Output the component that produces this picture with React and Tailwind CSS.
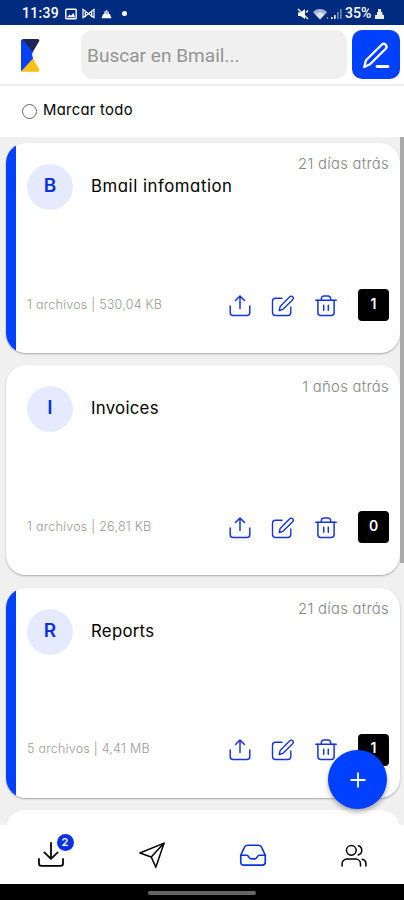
import clsx from "clsx";

const folders = [
  { letter: "B", name: "Bmail infomation", date: "21 días atrás", files: "1 archivos | 530,04 KB", count: 1, unread: true, nameClass: "tracking-[0.53px]" },
  { letter: "I", name: "Invoices", date: "1 años atrás", files: "1 archivos | 26,81 KB", count: 0, unread: false, nameClass: "tracking-[0.27px]" },
  { letter: "R", name: "Reports", date: "21 días atrás", files: "5 archivos | 4,41 MB", count: 1, unread: true, nameClass: "tracking-[0.27px]" },
];

function Icon({ children, className, width = 1.5 }) {
  return (
    <svg viewBox="0 0 24 24" fill="none" stroke="currentColor" strokeWidth={width} strokeLinecap="round" strokeLinejoin="round" className={clsx("shrink-0", className)}>
      {children}
    </svg>
  );
}

function StatusBar() {
  return (
    <div className="flex h-[25px] shrink-0 items-center bg-[#002b7f] pt-[2px] pl-[22px] pr-[20px] font-['Roboto',sans-serif] text-[14px] font-medium text-white">
      <span className="w-[37px] tracking-[0.3px]">11:39</span>
      <svg viewBox="0 0 12 12" className="ml-[6px] size-3">
        <rect x="0.8" y="1.2" width="10.4" height="9.6" rx="0.8" fill="none" stroke="white" strokeWidth="1.4" />
        <path d="M2 9.3 4.5 6.5 6 7.7 8.3 5 10.3 9.3z" fill="white" />
      </svg>
      <svg viewBox="0 0 14 12" className="ml-[5px] h-[11px] w-[13px]" fill="none" stroke="white" strokeWidth="1.3">
        <path d="M1 10.5V1.5l6 4.7 6-4.7v9L7 6.2z" />
        <path d="M3.5 3v7M10.5 3v7" />
      </svg>
      <svg viewBox="0 0 12 12" className="ml-[6px] h-[10px] w-[11px]" fill="white">
        <path d="M3 6V3.5L6 1l3 2.5V6z" opacity="0.7" />
        <path d="M2 6h8l2 5H0z" />
      </svg>
      <span className="ml-[10px] size-[5px] rounded-full bg-white" />
      <span className="flex-1" />
      <svg viewBox="0 0 12 12" className="size-3" fill="white">
        <path d="M1 4.5h2.5L8 1v10L3.5 8H1z" />
        <path d="m1 1 10 10M9 4.5l2-2" stroke="white" strokeWidth="1.4" />
      </svg>
      <svg viewBox="0 0 16 12" className="ml-[4px] h-3 w-4" fill="white">
        <path d="M0 4.2C4-.2 10-.2 14 4.2L7 11.5z" opacity="0.65" />
        <path d="M2.5 6.5c3-2.6 6-2.6 9 0L7 11.5z" opacity="0.6" />
        <circle cx="14.5" cy="10" r="0.8" opacity="0.7" />
      </svg>
      <svg viewBox="0 0 12 12" className="ml-[1px] mr-[3px] size-3" fill="white">
        <path d="M1 9h1.6v2H1zM4 7h1.6v4H4z" />
        <path d="M7 4h1.6v7H7zM10 1h1.6v10H10z" opacity="0.45" />
      </svg>
      <span className="w-[30px]">35%</span>
      <svg viewBox="0 0 9 12" className="h-3 w-[9px]" fill="white">
        <path d="M3 1h3v2l1.5 2v2H9v4H0V7h2V4h1z" opacity="0.9" />
      </svg>
    </div>
  );
}

function Header() {
  return (
    <div className="flex h-[61px] shrink-0 items-center border-b-2 border-[#eeeeee] bg-white pl-[21px]">
      <svg viewBox="0 0 19 33" className="mt-[2px] h-[33px] w-[19px]">
        <path d="M2 0h14.5c1.6 0 2.3 1.2 1.5 2.6L11.5 13.5 1 1z" fill="#1d2456" />
        <path d="M0 2C0 .8.8.2 1.6.8L11.8 13c-1 1.8-1 4.4.6 6.4L1.6 32C.8 32.6 0 32 0 31z" fill="#0540f5" />
        <path d="M12 19.5 18 30c.8 1.5 0 2.8-1.5 2.8H1.5c-.8 0-1-.6-.5-1.2z" fill="#fcc113" />
      </svg>
      <div className="ml-[41px] flex h-[49px] w-[266px] items-center rounded-xl bg-[#f0f0f0] pt-[3px] pl-[6px] font-['Roboto',sans-serif] text-[19px] text-[#949494]">
        <span className="tracking-[0.04px]">Buscar en Bmail...</span>
      </div>
      <button className="ml-[5px] grid h-[49px] w-[48px] place-items-center rounded-[10px] bg-[#0040ff] text-white">
        <svg viewBox="0 0 30 30" className="size-[30px]" fill="none" stroke="currentColor" strokeWidth="2.3" strokeLinejoin="round" strokeLinecap="round">
          <path d="M3.2 27 5 20.2 20.7 4.8c1.2-1.2 2.8-1.2 4 0s1.1 2.7 0 3.9L9 24.2z" />
          <path d="M16 26.5h11" strokeWidth="2.8" />
        </svg>
      </button>
    </div>
  );
}

function FolderCard({ folder }) {
  return (
    <div className="flex h-[210px] shrink-0 overflow-hidden rounded-[20px] bg-white pr-[11px] shadow-[0_1px_2px_rgba(0,0,0,0.3)]">
      <div className={clsx("w-[10px] shrink-0", folder.unread && "bg-[#0040ff]")} />
      <div className="flex flex-1 flex-col justify-between pl-[11px]">
        <div className="flex items-start pt-[21px]">
          <div className="grid size-[46px] place-items-center rounded-full bg-[#e6eaff] pb-[2px] text-[19px] font-semibold text-[#0833df]">
            {folder.letter}
          </div>
          <h2 className={clsx("ml-[18px] mt-[11px] whitespace-nowrap text-[16.8px] leading-[23px] text-black", folder.nameClass)}>{folder.name}</h2>
          <span className="-mt-[8.6px] ml-auto whitespace-nowrap text-[14.8px] leading-[18px] font-light tracking-[0.3px] text-[#858585]">{folder.date}</span>
        </div>
        <div className="mb-[32px] flex h-8 items-center">
          <span className="flex-1 whitespace-nowrap text-[12.5px] font-light tracking-[0.24px] text-[#999]">{folder.files}</span>
          <div className="flex items-center gap-[19px] pt-[1px] text-[#1436d9]">
            <Icon className="size-6">
              <path d="M2.2 12v6.5a3 3 0 0 0 3 3h13.6a3 3 0 0 0 3-3V12" />
              <path d="M12 14.5v-12M7.5 6.5 12 2l4.5 4.5" />
            </Icon>
            <Icon className="size-6" width={1.4}>
              <path d="M11 4.2H4.5a3 3 0 0 0-3 3v11.3a3 3 0 0 0 3 3h12.3a3 3 0 0 0 3-3V13" />
              <path d="m8.2 16.5 1-4.1L18.5 3c1-1.1 2.4-1.1 3.2-.3s.8 2.1-.3 3.2L12 15.3z" />
            </Icon>
            <Icon className="size-6">
              <path d="M1.8 6.2h20.4M7.3 6V4.7a2.7 2.7 0 0 1 2.7-2.7h4a2.7 2.7 0 0 1 2.7 2.7V6" />
              <path d="M3.9 6.3v12.2a3 3 0 0 0 3 3h10.2a3 3 0 0 0 3-3V6.3M9.7 11.2v5M14.3 11.2v5" />
            </Icon>
          </div>
          <span className="ml-[20px] grid h-8 w-[31px] place-items-center rounded bg-black pb-[4px] text-[14px] font-semibold text-white">{folder.count}</span>
        </div>
      </div>
    </div>
  );
}

function BottomNav() {
  return (
    <nav className="grid h-[59px] shrink-0 grid-cols-4 place-items-center bg-white text-black">
      <div className="relative size-[28px]">
        <Icon className="size-[28px]" width={1.5}>
          <path d="M1.7 15.3v4a2 2 0 0 0 2 2h16.6a2 2 0 0 0 2-2v-4M12 1.5v13.7M6.3 9.7l5.7 5.7 5.7-5.7" />
        </Icon>
        <span className="absolute -top-[7px] left-[20px] grid size-[17px] place-items-center rounded-full bg-[#0833df] text-[11px] font-semibold text-white">2</span>
      </div>
      <Icon className="size-[26px]" width={1.4}>
        <path d="M23.2 1 .8 10.2l10.5 3.6 4.2 9.4zM23.2 1 11.3 13.8" />
      </Icon>
      <Icon className="size-[28px] text-[#0833df]" width={1.4}>
        <path d="M1.5 12.2h5.2c1 0 1.3.8 1.8 1.7.5 1 1 1.4 2 1.4h3c1 0 1.5-.5 2-1.4.5-.9.8-1.7 1.8-1.7h5.2" />
        <path d="M1.5 12.2 4.6 5.4c.5-1.2 1.5-1.8 2.8-1.8h9.2c1.3 0 2.3.6 2.8 1.8l3.1 6.8v6c0 1.6-.9 2.5-2.5 2.5H4c-1.6 0-2.5-.9-2.5-2.5z" />
      </Icon>
      <Icon className="mt-[2px] size-[26px]" width={1.4}>
        <circle cx="9.5" cy="6.8" r="4.5" />
        <path d="M1 21.2v-2a4.4 4.4 0 0 1 4.4-4.4h8.2a4.4 4.4 0 0 1 4.4 4.4v2M23 21.2v-2a4.4 4.4 0 0 0-3.4-4.2M16 2.5a4.5 4.5 0 0 1 0 8.6" />
      </Icon>
    </nav>
  );
}

export default function App() {
  return (
    <div className="relative flex h-[900px] w-[404px] flex-col overflow-hidden bg-[#f0f0f1] font-['Inter',sans-serif] [font-feature-settings:'cv11']">
      <StatusBar />
      <Header />
      <label className="flex h-[51px] shrink-0 items-center bg-white pl-[22px] text-[14.8px] text-black">
        <span className="mt-[-1px] size-[15px] rounded-full border border-[#666]" />
        <span className="-mt-[2px] ml-[6px] tracking-[0.3px]">Marcar todo</span>
      </label>
      <main className="flex min-h-0 flex-1 overflow-hidden">
        <div className="flex w-[400px] flex-col gap-[12.4px] pt-[6px] pl-[6px]">
          {folders.map((folder) => (
            <FolderCard key={folder.name} folder={folder} />
          ))}
          <div className="h-[210px] shrink-0 rounded-[20px] bg-white" />
        </div>
        <div className="h-[426px] w-[4px] bg-[#aaaaaa]" />
      </main>
      <BottomNav />
      <div className="flex h-4 shrink-0 justify-center bg-black pt-[7px]">
        <div className="h-[4px] w-[108px] rounded-full bg-[#666]" />
      </div>
      <button className="absolute top-[750px] left-[328px] grid size-[59px] place-items-center rounded-full bg-[#0040ff] text-white shadow-[0_3px_5px_rgba(0,0,0,0.3)]">
        <svg viewBox="0 0 16 16" className="size-4" stroke="currentColor" strokeWidth="1.8">
          <path d="M8 .5v15M.5 8h15" />
        </svg>
      </button>
    </div>
  );
}
